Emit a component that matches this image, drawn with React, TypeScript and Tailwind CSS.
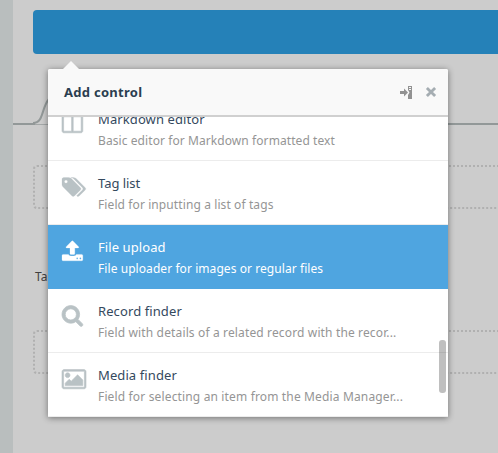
const icons = {
  columns: 'M160 1536h608v-1152h-640v1120q0 13 9.5 22.5t22.5 9.5zM1536 1504v-1120h-640v1152h608q13 0 22.5-9.5t9.5-22.5zM1664 288v1216q0 66-47 113t-113 47h-1344q-66 0-113-47t-47-113v-1216q0-66 47-113t113-47h1344q66 0 113 47t47 113z',
  tags: 'M448 448q0-53-37.5-90.5t-90.5-37.5-90.5 37.5-37.5 90.5 37.5 90.5 90.5 37.5 90.5-37.5 37.5-90.5zm1067 576q0 53-37 90l-491 492q-39 37-91 37-53 0-90-37l-715-716q-38-37-64.5-101t-26.5-117v-416q0-52 38-90t90-38h416q53 0 117 26.5t102 64.5l715 714q37 39 37 91zm384 0q0 53-37 90l-491 492q-39 37-91 37-36 0-59-14t-53-45l470-470q37-37 37-90 0-52-37-91l-715-714q-38-38-102-64.5t-117-26.5h224q53 0 117 26.5t102 64.5l715 714q37 39 37 91z',
  upload: 'M1280 1472q0-26-19-45t-45-19-45 19-19 45 19 45 45 19 45-19 19-45zm256 0q0-26-19-45t-45-19-45 19-19 45 19 45 45 19 45-19 19-45zm128-224v320q0 40-28 68t-68 28h-1472q-40 0-68-28t-28-68v-320q0-40 28-68t68-28h427q21 56 70.5 92t110.5 36h256q61 0 110.5-36t70.5-92h427q40 0 68 28t28 68zm-325-648q-17 40-59 40h-256v448q0 26-19 45t-45 19h-256q-26 0-45-19t-19-45v-448h-256q-42 0-59-40-17-39 14-69l448-448q18-19 45-19t45 19l448 448q31 30 14 69z',
  search: 'M1152 832q0-185-131.500-316.500t-316.500-131.500-316.500 131.500-131.500 316.500 131.500 316.500 316.500 131.500 316.500-131.500 131.500-316.500zm512 832q0 52-38 90t-90 38q-54 0-90-38l-343-342q-179 124-399 124-143 0-273.500-55.500t-225-150-150-225-55.500-273.500 55.500-273.500 150-225 225-150 273.500-55.500 273.500 55.500 225 150 150 225 55.500 273.500q0 220-124 399l343 343q37 37 37 90z',
  picture: 'M640 576q0 80-56 136t-136 56-136-56-56-136 56-136 136-56 136 56 56 136zm1024 384v448h-1408v-192l320-320 160 160 512-512zm96-704h-1600q-13 0-22.5 9.5t-9.5 22.5v1216q0 13 9.5 22.5t22.5 9.5h1600q13 0 22.5-9.5t9.5-22.5v-1216q0-13-9.5-22.5t-22.5-9.5zm160 32v1216q0 66-47 113t-113 47h-1600q-66 0-113-47t-47-113v-1216q0-66 47-113t113-47h1600q66 0 113 47t47 113z',
};

type Control = {
  icon: keyof typeof icons;
  weight: number;
  title: string;
  text: string;
  active?: boolean;
  titleClass: string;
  textClass: string;
};

const controls: Control[] = [
  { icon: 'columns', weight: 50, title: 'Markdown editor', text: 'Basic editor for Markdown formatted text', titleClass: 'tracking-[0.1px]', textClass: 'tracking-[0.08px]' },
  { icon: 'tags', weight: 20, title: 'Tag list', text: 'Field for inputting a list of tags', titleClass: 'tracking-[-0.05px]', textClass: 'tracking-[0.1px]' },
  { icon: 'upload', weight: 20, title: 'File upload', text: 'File uploader for images or regular files', active: true, titleClass: 'tracking-[0.08px]', textClass: 'tracking-[0.07px]' },
  { icon: 'search', weight: 60, title: 'Record finder', text: 'Field with details of a related record with the recor...', titleClass: 'tracking-[0.1px]', textClass: 'tracking-[0.14px]' },
  { icon: 'picture', weight: 50, title: 'Media finder', text: 'Field for selecting an item from the Media Manager...', titleClass: 'tracking-[0.1px]', textClass: 'tracking-[0.15px]' },
];

function Row({ icon, weight, title, text, active, titleClass, textClass }: Control) {
  return (
    <li className={`flex h-16 border-b pl-[13.5px] pt-[15px] ${active ? 'border-[#4fa5e0] bg-[#4fa5e0]' : 'border-[#ececec] bg-white'}`}>
      <svg
        viewBox="0 0 1920 1792"
        strokeWidth={weight}
        className={`h-[22.4px] w-6 shrink-0 overflow-visible ${active ? 'fill-white stroke-white' : 'fill-[#b9c2c5] stroke-[#b9c2c5]'}`}
      >
        <path d={icons[icon]} />
      </svg>
      <div className="-mt-[3px] ml-[12.5px] whitespace-nowrap">
        <div className={`text-[13px] leading-[21px] ${active ? 'text-white' : 'text-[#34495e]'} ${titleClass}`}>{title}</div>
        <div className={`text-[12px] leading-[21px] ${active ? 'text-white' : 'text-[#959595]'} ${textClass}`}>{text}</div>
      </div>
    </li>
  );
}

export default function App() {
  return (
    <div className="relative flex h-[453px] w-[498px] overflow-hidden bg-[#cccccc] font-['Noto_Sans',sans-serif]">
      <div className="w-[13px] shrink-0 bg-[#b9bebe]" />
      <main className="flex min-w-0 grow flex-col pt-2.5">
        <div className="ml-5 h-11 shrink-0 rounded-l-[4px] bg-[#2581b8]" />
        <svg viewBox="0 0 485 40" className="mt-[34px] h-10 w-[485px] shrink-0" fill="none">
          <path d="M0 36H22M400 36H485" stroke="#929898" strokeWidth="2" />
          <path d="M20 35C31 35 28 20 36 11" stroke="#929898" strokeWidth="2" />
          <path d="M22 36.500H41" stroke="#a4a8a8" strokeWidth="1" />
        </svg>
        <div className="-mr-1 ml-5 mt-[37px] h-11 shrink-0 rounded-[4px] border-2 border-dotted border-[#b0b0b0]" />
        <div className="ml-[22px] mt-[58px] h-5 text-[12px] leading-5 text-[#404040]">Ta</div>
        <div className="-mr-1 ml-5 mt-[43px] h-11 shrink-0 rounded-[4px] border-2 border-dotted border-[#b0b0b0]" />
      </main>

      <section className="absolute left-12 top-[69px] flex h-[348px] w-[400px] flex-col rounded-t-[2px] bg-white shadow-[0_1px_6px_rgba(0,0,0,0.45)]">
        <svg viewBox="0 0 16 8" className="absolute -top-2 left-[14.5px] h-2 w-4 fill-[#f9f9f9]">
          <path d="M0 8L8 0L16 8Z" />
        </svg>
        <header className="flex h-12 shrink-0 items-center rounded-t-[2px] border-b-2 border-[#d0d0d0] bg-[#f9f9f9] pl-4">
          <h1 className="grow pt-0.5 text-[13px] font-bold tracking-[0.28px] text-[#2b3e50]">Add control</h1>
          <svg viewBox="0 0 12 13" className="mr-[14px] h-[13px] w-3" fill="#929292">
            <path d="M0 5h4V2.500l4 4L4 10.500V8H0z" />
            <path fillRule="evenodd" d="M8 0H12V13H8V9L9.500 6.500L8 4ZM9 1V2H11V1ZM9 3V4H11V3Z" />
          </svg>
          <svg viewBox="0 0 10 10" className="mr-3 h-2.5 w-2.5 overflow-visible" stroke="#a5adb2" strokeWidth="2.8">
            <path d="M0.900 0.900L9.100 9.100M9.100 0.900L0.900 9.100" />
          </svg>
        </header>
        <div className="h-[300px] overflow-hidden">
          <ul className="-mt-5">
            {controls.map((control) => <Row key={control.icon} {...control} />)}
          </ul>
        </div>
        <div className="absolute right-0.5 top-[271px] h-[53px] w-[7px] rounded-[3px] bg-black/25" />
      </section>
    </div>
  );
}
